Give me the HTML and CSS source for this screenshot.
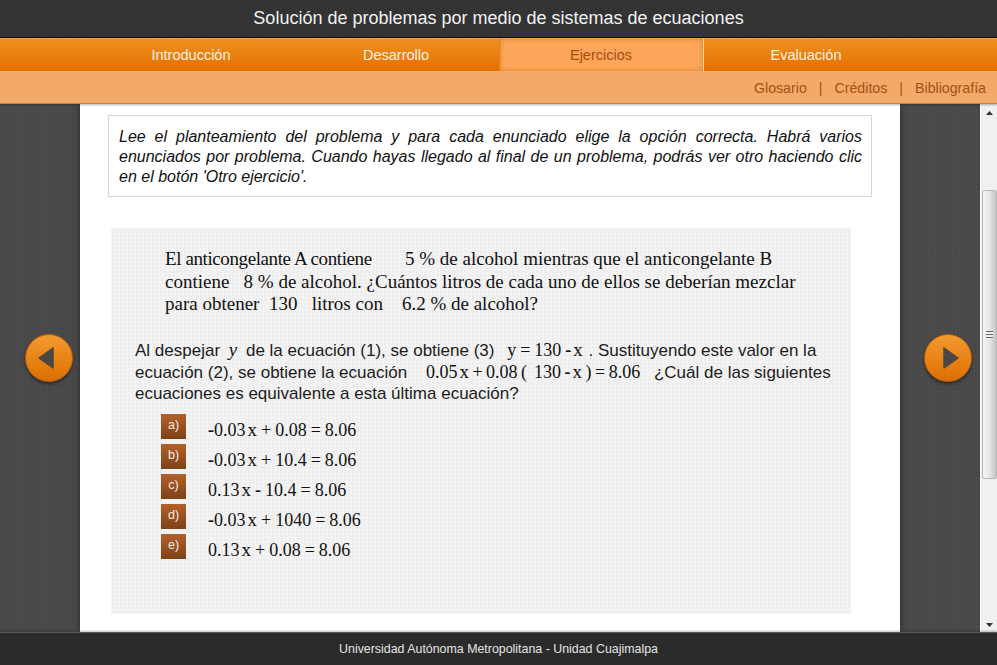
FILE: index.html
```html
<!DOCTYPE html>
<html lang="es">
<head>
    <meta charset="UTF-8">
    <title>Solución de problemas por medio de sistemas de ecuaciones</title>
    <link rel="stylesheet" href="styles.css">
</head>
<body>
    <header class="titlebar">Solución de problemas por medio de sistemas de ecuaciones</header>
    <nav class="mainnav">
        <a href="#">Introducción</a>
        <a href="#">Desarrollo</a>
        <a href="#" class="active">Ejercicios</a>
        <a href="#">Evaluación</a>
    </nav>
    <div class="subnav">
        <a href="#">Glosario</a><span>|</span><a href="#">Créditos</a><span>|</span><a href="#">Bibliografía</a>
    </div>

    <div class="middle">
        <div class="stage">
            <main class="sheet">
                <p class="instructions">Lee el planteamiento del problema y para cada enunciado elige la opción correcta. Habrá varios enunciados por problema. Cuando hayas llegado al final de un problema, podrás ver otro haciendo clic en el botón 'Otro ejercicio'.</p>

                <section class="exercise">
                    <p class="problem"><span class="tight">El anticongelante A contiene</span> &nbsp;&nbsp;&nbsp;&nbsp;&nbsp; 5 % de alcohol mientras que el anticongelante B contiene &nbsp;&nbsp;8 % de alcohol. ¿Cuántos litros de cada uno de ellos se deberían mezclar para obtener &nbsp;130 &nbsp;&nbsp;litros con &nbsp;&nbsp;&nbsp;6.2 % de alcohol?</p>

                    <p class="question">Al despejar <i class="math var">y</i> de la ecuación (1), se obtiene (3) <span class="math inl">y = 130 <b>-</b><span class="x">x</span></span> . Sustituyendo este valor en la ecuación (2), se obtiene la ecuación <span class="math eq">0.05<span class="x">x</span> + 0.08 ( &nbsp;130 <b>-</b><span class="x">x</span> ) = 8.06</span> ¿Cuál de las siguientes ecuaciones es equivalente a esta última ecuación?</p>

                    <ul class="options">
                        <li><span class="letter">a)</span><span class="math"><b>-</b>0.03<span class="x">x</span> + 0.08 = 8.06</span></li>
                        <li><span class="letter">b)</span><span class="math"><b>-</b>0.03<span class="x">x</span> + 10.4 = 8.06</span></li>
                        <li><span class="letter">c)</span><span class="math">0.13<span class="x">x</span> <b>-</b> 10.4 = 8.06</span></li>
                        <li><span class="letter">d)</span><span class="math"><b>-</b>0.03<span class="x">x</span> + 1040 = 8.06</span></li>
                        <li><span class="letter">e)</span><span class="math">0.13<span class="x">x</span> + 0.08 = 8.06</span></li>
                    </ul>
                </section>
            </main>

            <a href="#" class="arrow prev">
                <svg viewBox="0 0 48 48" width="48" height="48"><path d="M28 14V34L14 24Z" fill="#4a4744" stroke="#4a4744" stroke-width="1.5" stroke-linejoin="round"/></svg>
            </a>
            <a href="#" class="arrow next">
                <svg viewBox="0 0 48 48" width="48" height="48"><path d="M20 14V34L34 24Z" fill="#4a4744" stroke="#4a4744" stroke-width="1.5" stroke-linejoin="round"/></svg>
            </a>
        </div>

        <div class="scrollbar">
            <svg class="sb-arrow" viewBox="0 0 7 4" width="7" height="4"><path d="M3.5 0L7 4H0Z" fill="#333"/></svg>
            <div class="sb-thumb"><div class="sb-grip"></div></div>
            <svg class="sb-arrow" viewBox="0 0 7 4" width="7" height="4"><path d="M0 0H7L3.5 4Z" fill="#333"/></svg>
        </div>
    </div>

    <footer class="footer">Universidad Autónoma Metropolitana - Unidad Cuajimalpa</footer>
</body>
</html>
```

FILE: styles.css
```css
* {
    box-sizing: border-box;
}
html, body {
    height: 100%;
}
body {
    margin: 0;
    display: flex;
    flex-direction: column;
    height: 665px;
    overflow: hidden;
    font-family: "Liberation Sans", Arial, sans-serif;
    color: #222;
    background: #484848;
}
a {
    text-decoration: none;
}
p {
    margin: 0;
}

.titlebar {
    height: 38px;
    flex: none;
    background: repeating-linear-gradient(45deg, #303030 0 1px, #353535 1px 3px);
    border-bottom: 1px solid #0c0c0c;
    color: #f2f2f2;
    font-size: 18px;
    line-height: 36px;
    text-align: center;
}

.mainnav {
    height: 34px;
    flex: none;
    display: flex;
    justify-content: center;
    background: linear-gradient(#f09120, #e36f00);
    border-top: 1px solid #f4a33f;
    border-bottom: 1px solid #f7b06a;
}
.mainnav a {
    width: 205px;
    color: #fdf3e6;
    font-size: 14.5px;
    line-height: 32px;
    text-align: center;
}
.mainnav a.active {
    background: #fba65a;
    box-shadow: inset 0 0 4px #e07c1e;
    color: #a64f12;
    border-right: 1px solid #fcd4a8;
    border-left: 1px solid #e87f10;
}

.subnav {
    height: 32px;
    flex: none;
    position: relative;
    z-index: 1;
    display: flex;
    justify-content: flex-end;
    gap: 12px;
    padding: 0 11px 0 0;
    background: #f4a968;
    border-bottom: 1px solid #b4855c;
    box-shadow: 0 1px 2px rgba(0,0,0,.3);
    font-size: 14.2px;
    line-height: 32px;
    color: #a3501a;
}
.subnav a {
    color: #a3501a;
}

.middle {
    flex: 1;
    min-height: 0;
    display: flex;
}
.stage {
    flex: 1;
    position: relative;
    display: flex;
    justify-content: center;
    background-color: #484848;
    background-image: repeating-linear-gradient(90deg, rgba(0,0,0,.06) 0 1px, transparent 1px 3px), repeating-linear-gradient(0deg, rgba(255,255,255,.03) 0 1px, transparent 1px 2px);
}

.sheet {
    width: 820px;
    background: #fff;
    padding: 11px 28px 0;
    box-shadow: 0 0 6px rgba(0,0,0,.5);
}
.instructions {
    height: 82px;
    border: 1px solid #d8d8d8;
    padding: 11px 9px 0 10px;
    font-size: 16px;
    line-height: 20px;
    font-style: italic;
    text-align: justify;
    color: #111;
}
.exercise {
    width: 740px;
    height: 386px;
    margin: 31px 0 0 3px;
    padding: 20px 22px 0 24px;
    background-color: #eeeeee;
    background-image: repeating-linear-gradient(90deg, rgba(255,255,255,.35) 0 1px, transparent 1px 4px), repeating-linear-gradient(0deg, rgba(255,255,255,.35) 0 1px, transparent 1px 4px);
}
.problem {
    margin-left: 30px;
    width: 640px;
    font-family: "Liberation Serif", "Times New Roman", serif;
    font-size: 19px;
    line-height: 22.5px;
    color: #111;
}
.tight {
    letter-spacing: -.4px;
}
.question {
    margin-top: 23px;
    width: 700px;
    font-size: 17px;
    line-height: 21px;
    color: #1c1c1c;
}
.math {
    font-family: "Liberation Serif", "Times New Roman", serif;
    font-size: 18px;
    color: #111;
}
.math.var {
    font-size: 19px;
    margin: 0 4px;
}
.math.inl {
    margin: 0 1px 0 8px;
    word-spacing: -.5px;
}
.math.eq {
    margin: 0 9px 0 14px;
    word-spacing: -1px;
}
.x {
    font-size: 19px;
    margin-left: 2px;
}
.options {
    list-style: none;
    margin: 8px 0 0 26px;
    padding: 0;
}
.options li {
    display: flex;
    align-items: center;
    height: 30px;
}
.options .math {
    margin: 7px 0 0 22px;
    word-spacing: -.5px;
}
.letter {
    width: 25px;
    height: 25px;
    background: linear-gradient(#b3602a, #7d4218);
    color: #f7ece2;
    font-size: 12.5px;
    line-height: 22px;
    text-align: center;
}

.arrow {
    position: absolute;
    top: 230px;
    width: 48px;
    height: 48px;
    border-radius: 50%;
    background: linear-gradient(#f29a32, #e67c0c 70%, #d96e05);
    border: 1px solid #b5600c;
    box-shadow: 0 2px 3px rgba(0,0,0,.45);
}
.arrow svg {
    display: block;
    margin: -1px;
}
.arrow.prev {
    left: 25px;
}
.arrow.next {
    left: 924px;
}

.scrollbar {
    width: 17px;
    flex: none;
    display: flex;
    flex-direction: column;
    align-items: center;
    background: #f0f0f0;
    border-left: 1px solid #fafafa;
    padding-top: 7px;
}
.sb-thumb {
    width: 15px;
    height: 289px;
    margin-top: 75px;
    margin-bottom: auto;
    border: 1px solid #b8b8b8;
    border-radius: 2px;
    background: linear-gradient(90deg, #f5f5f5, #e6e6e6 50%, #c4c4c4);
    display: flex;
    align-items: center;
    justify-content: center;
}
.sb-grip {
    width: 7px;
    height: 8px;
    background: repeating-linear-gradient(#666 0 1px, #eee 1px 3px);
}
.scrollbar .sb-arrow {
    flex: none;
}
.scrollbar .sb-arrow:last-child {
    margin-bottom: 5px;
}

.footer {
    height: 33px;
    flex: none;
    position: relative;
    background: #2b2b2b;
    border-top: 1px solid #5a5a5a;
    box-shadow: 0 -1px 2px rgba(0,0,0,.25);
    color: #e4e4e4;
    font-size: 12.4px;
    line-height: 32px;
    text-align: center;
}
```
